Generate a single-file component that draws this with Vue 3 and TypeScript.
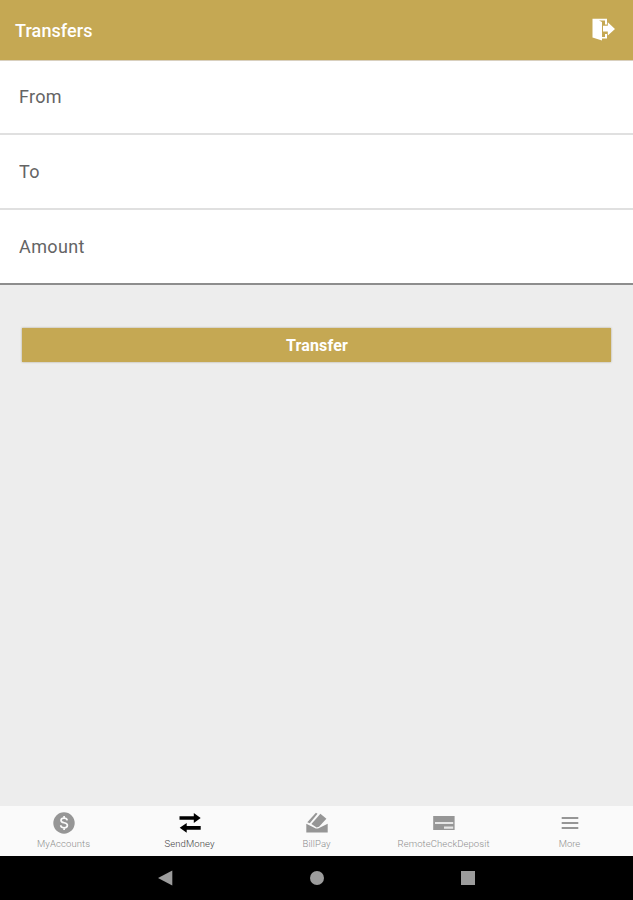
<script setup lang="ts">
import { ref } from 'vue'

type IconName = 'dollar' | 'arrows' | 'envelope' | 'card' | 'menu'

interface Tab {
  label: string
  icon: IconName
  width: number
}

const fields: { label: string; width: number }[] = [
  { label: 'From', width: 42.5 },
  { label: 'To', width: 20.5 },
  { label: 'Amount', width: 65.5 },
]

const tabs: Tab[] = [
  { label: 'MyAccounts', icon: 'dollar', width: 53 },
  { label: 'SendMoney', icon: 'arrows', width: 50 },
  { label: 'BillPay', icon: 'envelope', width: 28 },
  { label: 'RemoteCheckDeposit', icon: 'card', width: 92 },
  { label: 'More', icon: 'menu', width: 21.5 },
]

const active = ref('SendMoney')
</script>

<template>
  <div class="screen">
    <header class="header">
      <h1 class="title">Transfers</h1>
      <button class="logout" aria-label="Log out">
        <svg width="26" height="26" viewBox="0 0 26 26">
          <path d="M2.5 1.8H17V7.5H15V3.6H9L12 5V20H15V17H17V21.5H12V23.6L2.5 20.6Z" fill="#fff" />
          <path d="M13 8.8H17.8V5.2L25 11.9L17.8 18.4V14.4H13Z" fill="#fff" />
        </svg>
      </button>
    </header>

    <main class="content">
      <div class="form">
        <div v-for="field in fields" :key="field.label" class="field">
          <svg class="field-label" width="120" height="24">
            <text x="0" y="18" :textLength="field.width">{{ field.label }}</text>
          </svg>
        </div>
      </div>
      <button class="submit">Transfer</button>
    </main>

    <nav class="tabs">
      <button
        v-for="tab in tabs"
        :key="tab.label"
        class="tab"
        :class="{ active: active === tab.label }"
        @click="active = tab.label"
      >
        <svg class="tab-icon" width="24" height="24" viewBox="0 0 24 24">
          <template v-if="tab.icon === 'dollar'">
            <circle cx="12" cy="12" r="10.7" fill="currentColor" />
            <path
              d="M15.2 9.3C15 7.9 13.8 7.1 12.1 7.1C10.2 7.1 9 8 9 9.4C9 12.6 15.4 10.9 15.4 14.3C15.4 15.9 14.1 16.8 12.1 16.8C10 16.8 8.8 15.9 8.7 14.3M12.1 5V7.1M12.1 16.8V19"
              fill="none"
              stroke="#fafafa"
              stroke-width="1.7"
            />
          </template>
          <template v-else-if="tab.icon === 'arrows'">
            <path d="M1.5 5.2H15.8V2L22.7 7.1L15.8 12V8.8H1.5Z" fill="currentColor" />
            <path d="M22.7 15H8.7V11.9L1.7 16.8L8.7 21.8V18.7H22.7Z" fill="currentColor" />
          </template>
          <template v-else-if="tab.icon === 'envelope'">
            <path d="M1.3 12.8L10.8 17.6H13L22.7 12.8V21.6H1.3Z" fill="currentColor" />
            <path d="M6.4 13L15.4 2.8L21.4 7.8L14 15.8L11.6 16.4Z" fill="currentColor" />
            <path d="M2.3 11.3L10.9 1.8L12.5 2.8L4.8 12.2Z" fill="currentColor" />
          </template>
          <template v-else-if="tab.icon === 'card'">
            <rect x="1.2" y="5" width="21.4" height="14" fill="currentColor" />
            <path d="M3 12H21.2M12 16.6H21.2" stroke="#e6e6e6" stroke-width="2.2" />
          </template>
          <path
            v-else
            d="M3.7 7H20.3M3.7 12H20.3M3.7 17H20.3"
            stroke="currentColor"
            stroke-width="1.8"
          />
        </svg>
        <svg class="tab-label" width="120" height="12">
          <text x="59.5" y="9" text-anchor="middle" :textLength="tab.width">{{ tab.label }}</text>
        </svg>
      </button>
    </nav>

    <div class="system-bar">
      <svg width="16" height="16" viewBox="0 0 16 16"><path d="M1 8L15.3 .5V15.5Z" fill="#9c9c9c" /></svg>
      <svg width="16" height="16" viewBox="0 0 16 16"><circle cx="8" cy="8" r="7" fill="#9c9c9c" /></svg>
      <svg width="16" height="16" viewBox="0 0 16 16"><rect x="1" y="1" width="14" height="14" fill="#9c9c9c" /></svg>
    </div>
  </div>
</template>

<style>
body {
  margin: 0;
}
</style>

<style scoped>
.screen {
  display: flex;
  flex-direction: column;
  height: 900px;
  background: #ededed;
  font-family: Roboto, sans-serif;
}

button {
  border: 0;
  padding: 0;
  background: none;
  font: inherit;
}

.header {
  display: flex;
  align-items: center;
  justify-content: space-between;
  box-sizing: border-box;
  height: 61px;
  padding: 0 17px 0 15px;
  border-bottom: 1px solid #d9d0bf;
  background: #c5a853;
}

.title {
  margin: 2px 0 0;
  color: #fff;
  font-size: 18px;
  font-weight: 500;
  letter-spacing: 0.1px;
  line-height: 24px;
}

.logout {
  display: flex;
}

.content {
  flex: 1;
}

.form {
  background: #fff;
}

.field {
  display: flex;
  align-items: center;
  box-sizing: border-box;
  height: 75px;
  padding-left: 19px;
  border-bottom: 2px solid #e0e0e0;
}

.field:first-child {
  height: 74px;
}

.field:last-child {
  border-bottom-color: #8d8d8d;
}

.field-label {
  fill: #646464;
  font-size: 18px;
}

.submit {
  display: block;
  width: 589px;
  height: 34px;
  margin: 43px 0 0 22px;
  padding: 1px 0 0 1px;
  background: #c5a853;
  box-shadow: 0 0 2px #aaa38c;
  color: #fff;
  font-size: 16px;
  font-weight: 700;
  letter-spacing: 0.15px;
}

.tabs {
  display: grid;
  grid-template-columns: repeat(5, 1fr);
  height: 50px;
  background: #fafafa;
}

.tab {
  display: flex;
  flex-direction: column;
  align-items: center;
  justify-content: flex-start;
  padding: 5px 0 0 1px;
  color: #969696;
}

.tab.active {
  color: #000;
}

.tab-label {
  margin-top: 3px;
  fill: #8e8e8e;
  font-size: 9.5px;
  font-weight: 300;
}

.active .tab-label {
  fill: #404040;
}

.system-bar {
  display: flex;
  align-items: center;
  justify-content: center;
  gap: 135.5px;
  height: 44px;
  background: #000;
}
</style>
